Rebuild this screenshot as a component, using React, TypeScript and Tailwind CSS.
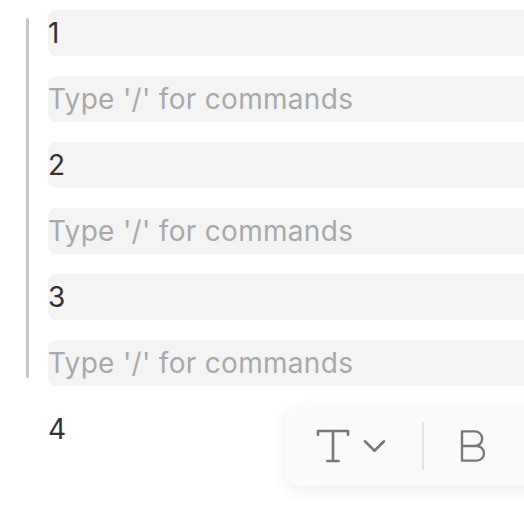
import React from 'react';

const rows: { text: string; placeholder?: boolean }[] = [
    { text: '1' },
    { text: "Type '/' for commands", placeholder: true },
    { text: '2' },
    { text: "Type '/' for commands", placeholder: true },
    { text: '3' },
    { text: "Type '/' for commands", placeholder: true },
];

const Toolbar: React.FC = () => (
    <div className="absolute left-[285px] top-[406px] h-[80px] w-[300px] rounded-2xl bg-[#fafafa] shadow-[0_4px_18px_rgba(0,0,0,0.08)] flex items-center pl-[33px] text-[#78777e]">
        {/* text style */}
        <svg width="30" height="30" viewBox="4 4 16 16" fill="none" stroke="currentColor" strokeWidth="1.4" strokeLinecap="round" strokeLinejoin="round" overflow="visible">
            <path d="M4 6V4h16v2" />
            <path d="M9 20h6" />
            <path d="M12 4v16" />
        </svg>
        <svg className="ml-[17px]" width="19" height="10" viewBox="6 9 12 6" fill="none" stroke="currentColor" strokeWidth="1.6" strokeLinecap="round" strokeLinejoin="round" overflow="visible">
            <path d="m6 9 6 6 6-6" />
        </svg>
        <div className="ml-[38px] w-[2px] h-[48px] bg-[#e4e4e6]" />
        {/* bold */}
        <svg className="ml-[38px]" width="22" height="30" viewBox="6 4 12 16" fill="none" stroke="currentColor" strokeWidth="1.3" strokeLinecap="round" strokeLinejoin="round" overflow="visible">
            <path d="M6 12h8a4 4 0 0 1 0 8H6V4h7a4 4 0 0 1 0 8" />
        </svg>
    </div>
);

const App: React.FC = () => {
    return (
        <div className="relative w-[524px] h-[508px] overflow-hidden bg-white font-['Inter','Liberation_Sans',sans-serif]">
            <div className="flex pt-[10px]">
                <div className="ml-[26px] mt-[8px] w-[3px] h-[360px] bg-[#c6c6c6] rounded-sm shrink-0" />
                <div className="ml-[19px] flex flex-col gap-[20px] w-[520px] shrink-0">
                    {rows.map((row, i) => (
                        <div key={i} className="h-[46px] rounded-lg bg-[#f4f4f4] text-[28px] leading-[46px] tracking-[0.3px]">
                            <span className={row.placeholder ? 'text-[#a9a9aa]' : 'text-[#313136]'}>{row.text}</span>
                        </div>
                    ))}
                    <div className="h-[46px] text-[28px] leading-[46px] text-[#313136]">4</div>
                </div>
            </div>
            <Toolbar />
        </div>
    );
};

export default App;
